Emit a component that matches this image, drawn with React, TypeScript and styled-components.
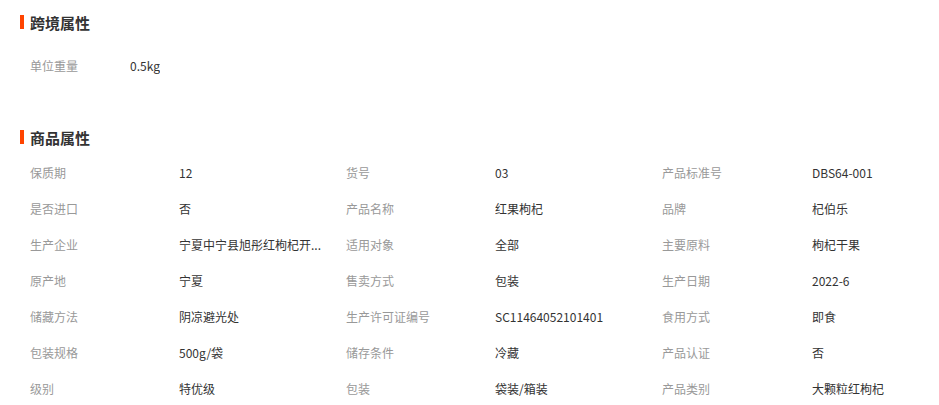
import React from "react";
import styled, { createGlobalStyle } from "styled-components";

const GlobalStyle = createGlobalStyle`
  body {
    margin: 0;
    background: #fff;
    font-family: "Noto Sans CJK SC", "Liberation Sans", sans-serif;
    color: #333;
  }
`;

const Page = styled.main`
  padding: 7px 0 0 20px;
  width: 919px;
`;

const Section = styled.section<{ $gap: number }>`
  display: flex;
  flex-direction: column;
  gap: ${(p) => p.$gap}px;
  & + & {
    margin-top: 39px;
  }
`;

const Title = styled.h2`
  display: flex;
  align-items: center;
  gap: 6px;
  margin: 0;
  height: 30px;
  font-size: 15px;
  font-weight: bold;
  color: #333;
  &::before {
    content: "";
    display: block;
    width: 4px;
    height: 14px;
    background: #ff4400;
  }
`;

const SimpleRow = styled.div`
  display: flex;
  align-items: center;
  height: 36px;
  padding-left: 10px;
  font-size: 12px;
`;

const AttrGrid = styled.div`
  display: grid;
  grid-template-columns: 149px 167px 149px 167px 150px 1fr;
  grid-auto-rows: 36px;
  align-items: center;
  padding-left: 10px;
  font-size: 12px;
`;

const Label = styled.span<{ $width?: number }>`
  color: #999;
  ${(p) => (p.$width ? `width: ${p.$width}px;` : "")}
`;

const Value = styled.span`
  display: block;
  color: #333;
  max-width: 150px;
  white-space: nowrap;
  overflow: hidden;
  text-overflow: ellipsis;
`;

// long values are already shortened by the page, as the listing shows them
const attrs: [string, string][] = [
  ["保质期", "12"],
  ["货号", "03"],
  ["产品标准号", "DBS64-001"],
  ["是否进口", "否"],
  ["产品名称", "红果枸杞"],
  ["品牌", "杞伯乐"],
  ["生产企业", "宁夏中宁县旭彤红枸杞开..."],
  ["适用对象", "全部"],
  ["主要原料", "枸杞干果"],
  ["原产地", "宁夏"],
  ["售卖方式", "包装"],
  ["生产日期", "2022-6"],
  ["储藏方法", "阴凉避光处"],
  ["生产许可证编号", "SC11464052101401"],
  ["食用方式", "即食"],
  ["包装规格", "500g/袋"],
  ["储存条件", "冷藏"],
  ["产品认证", "否"],
  ["级别", "特优级"],
  ["包装", "袋装/箱装"],
  ["产品类别", "大颗粒红枸杞"],
];

export default function App() {
  return (
    <Page>
      <GlobalStyle />
      <Section $gap={10}>
        <Title>跨境属性</Title>
        <SimpleRow>
          <Label $width={100}>单位重量</Label>
          <Value>0.5kg</Value>
        </SimpleRow>
      </Section>
      <Section $gap={2}>
        <Title>商品属性</Title>
        <AttrGrid>
          {attrs.map(([label, value]) => (
            <React.Fragment key={label}>
              <Label>{label}</Label>
              <Value>{value}</Value>
            </React.Fragment>
          ))}
        </AttrGrid>
      </Section>
    </Page>
  );
}
